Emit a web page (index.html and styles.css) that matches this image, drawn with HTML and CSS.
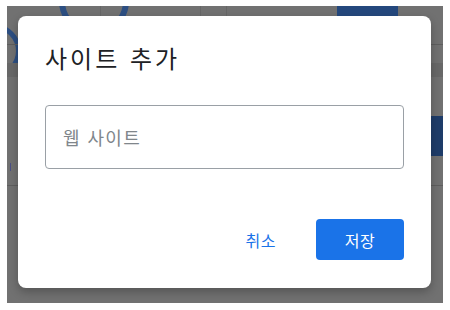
FILE: index.html
```html
<!DOCTYPE html>
<html lang="ko">
<head>
<meta charset="utf-8">
<link rel="stylesheet" href="styles.css">
</head>
<body>
<div class="backdrop">
  <div class="bg-layer" aria-hidden="true">
    <div class="bg-ring"></div>
    <div class="bg-ring-left"></div>
    <div class="bg-square"></div>
    <div class="bg-vline v1"></div>
    <div class="bg-vline v2"></div>
    <div class="bg-vline v3"></div>
    <div class="bg-band"></div>
    <div class="bg-hline h1"></div>
    <div class="bg-hline h2"></div>
    <div class="bg-btn"></div>
    <div class="bg-mark"></div>
  </div>
  <div class="dialog" role="dialog">
    <h1 class="title">사이트 추가</h1>
    <div class="field">
      <input class="input" type="text" placeholder="웹 사이트">
    </div>
    <div class="actions">
      <button class="btn btn-text">취소</button>
      <button class="btn btn-primary">저장</button>
    </div>
  </div>
</div>
</body>
</html>
```
FILE: styles.css
```css
html, body {
  margin: 0;
  padding: 0;
  background: #ffffff;
}
body {
  font-family: "Noto Sans CJK KR", "Noto Sans", Roboto, sans-serif;
}
.backdrop {
  position: relative;
  margin: 6px 0 0 7px;
  width: 436px;
  height: 297px;
  background: #717171;
  overflow: hidden;
  box-sizing: border-box;
  padding: 10px 12px 15px 11px;
  display: flex;
}
.bg-layer {
  position: absolute;
  inset: 0;
}
.bg-ring {
  position: absolute;
  left: 52px;
  top: -40px;
  width: 58px;
  height: 58px;
  border: 6px solid #2d4f82;
  border-radius: 50%;
}
.bg-ring-left {
  position: absolute;
  left: -40px;
  top: 18px;
  width: 44px;
  height: 44px;
  border: 5px solid #2d4f82;
  border-radius: 50%;
}
.bg-square {
  position: absolute;
  left: 330px;
  top: 0;
  width: 61px;
  height: 12px;
  background: #24487d;
}
.bg-vline {
  position: absolute;
  top: 0;
  width: 1px;
  height: 10px;
  background: #666;
}
.v1 { left: 93px; }
.v2 { left: 193px; }
.v3 { left: 219px; }
.bg-band {
  position: absolute;
  left: 0;
  right: 0;
  top: 57px;
  height: 14px;
  background: #686868;
}
.bg-hline {
  position: absolute;
  left: 0;
  right: 0;
  height: 1px;
  background: #5e5e5e;
}
.h1 { top: 38px; }
.h2 { top: 179px; }
.bg-btn {
  position: absolute;
  left: 420px;
  top: 110px;
  width: 20px;
  height: 40px;
  border-radius: 4px;
  background: #1e3c69;
}
.bg-mark {
  position: absolute;
  left: 3px;
  top: 157px;
  width: 1px;
  height: 8px;
  background: #4b4f86;
}
.dialog {
  position: relative;
  width: 413px;
  height: 272px;
  box-sizing: border-box;
  background: #ffffff;
  border-radius: 8px;
  box-shadow: 0 4px 10px rgba(0, 0, 0, 0.25);
  padding: 25px 27px 28px 27px;
  display: flex;
  flex-direction: column;
}
.title {
  margin: 0;
  font-size: 24px;
  font-weight: 400;
  letter-spacing: 3px;
  line-height: 34px;
  color: #202124;
}
.field {
  margin-top: 30px;
}
.input {
  display: block;
  width: 100%;
  height: 64px;
  box-sizing: border-box;
  border: 1px solid #9aa0a6;
  border-radius: 4px;
  padding: 0 17px;
  font-family: inherit;
  font-size: 18px;
  letter-spacing: 1.4px;
  color: #202124;
  background: #fff;
  outline: none;
}
.input::placeholder {
  color: #80868b;
}
.actions {
  margin-top: auto;
  display: flex;
  justify-content: flex-end;
  align-items: center;
  gap: 14px;
}
.btn {
  font-family: inherit;
  font-size: 16px;
  font-weight: 400;
  letter-spacing: 0.5px;
  border: none;
  border-radius: 4px;
  height: 41px;
  cursor: pointer;
}
.btn-text {
  background: transparent;
  color: #1a73e8;
  padding: 0 26px 0 24px;
}
.btn-primary {
  background: #1a73e8;
  color: #ffffff;
  width: 88px;
}
```
